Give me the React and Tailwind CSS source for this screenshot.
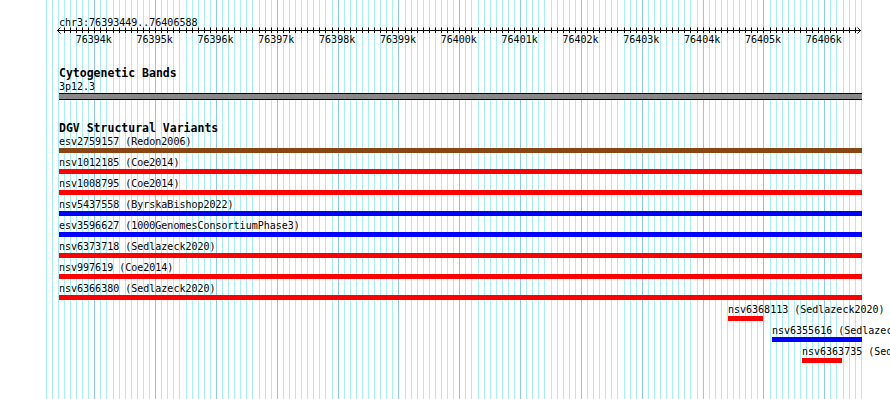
const BP0 = 76393449;
const X0 = 60.8;
const SCALE = 0.060834; // px per bp

const px = (bp) => X0 + (bp - BP0) * SCALE;

const variants = [
  { label: "esv2759157 (Redon2006)", left: 0, width: 803, color: "bg-[#8b4513]" },
  { label: "nsv1012185 (Coe2014)", left: 0, width: 803, color: "bg-[#ff0000]" },
  { label: "nsv1008795 (Coe2014)", left: 0, width: 803, color: "bg-[#ff0000]" },
  { label: "nsv5437558 (ByrskaBishop2022)", left: 0, width: 803, color: "bg-[#0000ff]" },
  { label: "esv3596627 (1000GenomesConsortiumPhase3)", left: 0, width: 803, color: "bg-[#0000ff]" },
  { label: "nsv6373718 (Sedlazeck2020)", left: 0, width: 803, color: "bg-[#ff0000]" },
  { label: "nsv997619 (Coe2014)", left: 0, width: 803, color: "bg-[#ff0000]" },
  { label: "nsv6366380 (Sedlazeck2020)", left: 0, width: 803, color: "bg-[#ff0000]" },
  { label: "nsv6368113 (Sedlazeck2020)", left: 669, width: 35, color: "bg-[#ff0000]" },
  { label: "nsv6355616 (Sedlazeck2020)", left: 713, width: 90, color: "bg-[#0000ff]" },
  { label: "nsv6363735 (Sedlazeck2020)", left: 743, width: 40, color: "bg-[#ff0000]" },
];

function GridLines() {
  const lines = [];
  for (let bp = 76393200; bp <= 76406600; bp += 100) {
    const x = Math.round(px(bp)) + 0.5;
    lines.push(
      <line
        key={bp}
        x1={x}
        x2={x}
        y1={0}
        y2={399}
        stroke={bp % 1000 === 0 ? "#8cc8f0" : "#a8eef2"}
        strokeWidth={1}
      />
    );
  }
  return (
    <svg className="absolute left-0 top-0 pointer-events-none" width={890} height={399}>
      {lines}
    </svg>
  );
}

function Ruler() {
  const ticks = [];
  const labels = [];
  for (let bp = 76393500; bp <= 76406500; bp += 100) {
    const x = Math.round(px(bp)) + 0.5;
    ticks.push(<line key={bp} x1={x} x2={x} y1={27.5} y2={33} stroke="#000" />);
    if (bp % 1000 === 0) {
      labels.push(
        <text key={bp} x={px(bp) - 0.5} y={43} textAnchor="middle" fill="#000">
          {bp / 1000}k
        </text>
      );
    }
  }

  return (
    <svg className="block text-[10px]" width={890} height={48}>
      <text x={59} y={26} fill="#000">
        chr3:76393449..76406588
      </text>
      <line x1={57} x2={861} y1={30.5} y2={30.5} stroke="#000" />
      <polyline points="60.5,27.5 57.5,30.5 60.5,33.5" fill="none" stroke="#000" />
      <polyline points="857.5,27.5 860.5,30.5 857.5,33.5" fill="none" stroke="#000" />
      {ticks}
      {labels}
    </svg>
  );
}

function VariantRow({ label, left, width, color }) {
  return (
    <div className="h-[21px]">
      <div className="text-[10px] leading-[12px] whitespace-nowrap" style={{ marginLeft: left }}>
        {label}
      </div>
      <div className={`h-[5px] ${color}`} style={{ marginLeft: left, width }} />
    </div>
  );
}

export default function App() {
  return (
    <div className="relative w-[890px] h-[399px] overflow-hidden bg-white text-black font-['DejaVu_Sans_Mono',monospace]">
      <GridLines />
      <div className="relative">
        <Ruler />

        <section className="mt-[19px] ml-[59px] w-[803px]">
          <h2 className="text-[11.5px] font-bold leading-[13px]">Cytogenetic Bands</h2>
          <div className="text-[10px] leading-[13px]">3p12.3</div>
          <div className="h-[7px] border-y border-black bg-[#888888]" />
        </section>

        <section className="mt-[22px] ml-[59px] w-[803px]">
          <h2 className="mb-[1px] text-[11.5px] font-bold leading-[13px]">DGV Structural Variants</h2>
          {variants.map((v) => (
            <VariantRow key={v.label} {...v} />
          ))}
        </section>
      </div>
    </div>
  );
}
